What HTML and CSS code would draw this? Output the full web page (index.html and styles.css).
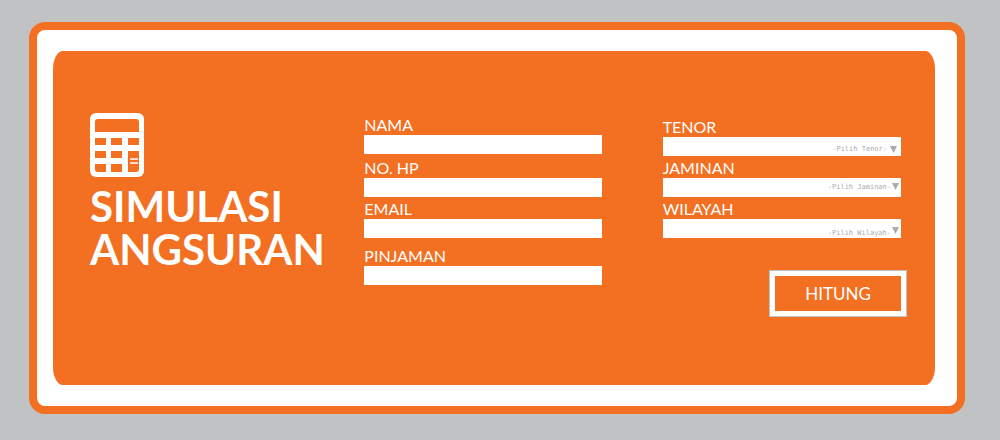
FILE: index.html
```html
<!DOCTYPE html>
<html lang="id">
<head>
<meta charset="utf-8">
<meta name="viewport" content="width=device-width, initial-scale=1">
<title>Simulasi Angsuran</title>
<link rel="stylesheet" href="styles.css">
</head>
<body>
<main class="frame">
  <form class="panel">
    <header class="intro">
      <svg class="calculator" viewBox="0 0 54 64" aria-hidden="true">
        <rect width="54" height="64" rx="6" fill="#fff"/>
        <g fill="#f36f21">
          <path d="M5 19V9q0-3 3-3h38q3 0 3 3v10z"/>
          <path d="M5 25h11v7H5zM21 25h11v7H21zM38 25h11v7H38z"/>
          <path d="M5 38h11v7H5zM21 38h11v7H21z"/>
          <path d="M5 51h11v8H8q-3 0-3-3zM21 51h11v8H21z"/>
          <path d="M38 38h11v18q0 3-3 3h-8z"/>
        </g>
        <path d="M40 46h8M40 50h8" stroke="#fff" stroke-width="1.6"/>
      </svg>
      <h1 class="title">SIMULASI<br>ANGSURAN</h1>
    </header>

    <div class="column">
      <div class="field">
        <label class="label" for="nama">NAMA</label>
        <input class="control" id="nama" type="text">
      </div>
      <div class="field field-spaced">
        <label class="label" for="hp">NO. HP</label>
        <input class="control" id="hp" type="tel">
      </div>
      <div class="field">
        <label class="label" for="email">EMAIL</label>
        <input class="control" id="email" type="email">
      </div>
      <div class="field field-wide">
        <label class="label" for="pinjaman">PINJAMAN</label>
        <input class="control" id="pinjaman" type="text">
      </div>
    </div>

    <div class="column column-options">
      <div class="field">
        <label class="label" for="tenor">TENOR</label>
        <div class="picker picker-tenor">
          <select class="control select" id="tenor"><option>-Pilih Tenor-</option></select>
        </div>
      </div>
      <div class="field">
        <label class="label" for="jaminan">JAMINAN</label>
        <div class="picker picker-jaminan">
          <select class="control select" id="jaminan"><option>-Pilih Jaminan-</option></select>
        </div>
      </div>
      <div class="field">
        <label class="label" for="wilayah">WILAYAH</label>
        <div class="picker picker-wilayah">
          <select class="control select" id="wilayah"><option>-Pilih Wilayah-</option></select>
        </div>
      </div>
      <button class="submit" type="submit">HITUNG</button>
    </div>
  </form>
</main>
</body>
</html>
```

FILE: styles.css
```css
:root {
  --orange: #f36f21;
  --grey: #c1c2c4;
}

* {
  box-sizing: border-box;
}

body {
  display: flex;
  flex-direction: column;
  min-height: 100vh;
  margin: 0;
  background: var(--grey);
  color: #fff;
  font-family: Lato, "Open Sans", sans-serif;
}

.frame {
  display: flex;
  flex: 1;
  margin: 22px 35px 26px 29px;
  padding: 21px 22px 21px 16px;
  border: 8px solid var(--orange);
  border-radius: 16px;
  background: #fff;
}

.panel {
  display: grid;
  flex: 1;
  grid-template-columns: minmax(0, 213fr) minmax(0, 237fr) minmax(0, 238fr);
  column-gap: 61px;
  align-items: start;
  padding: 62px 34px 60px 37px;
  border-radius: 10px / 18px;
  background: var(--orange);
}

.calculator {
  display: block;
  width: 54px;
  height: 64px;
}

.title {
  margin: 8px 0 0;
  font-size: 42px;
  font-weight: 700;
  line-height: 43px;
  white-space: nowrap;
}

.column {
  display: flex;
  flex-direction: column;
  gap: 2px;
  padding-top: 2px;
}

.column-options {
  gap: 1px;
  padding-top: 4px;
}

.field {
  display: flex;
  flex-direction: column;
}

.field-spaced {
  padding-top: 2px;
}

.field-wide {
  padding-top: 6px;
}

.label {
  font-size: 16px;
  line-height: 20px;
}

.control {
  display: block;
  width: 100%;
  height: 19px;
  margin: 0;
  padding: 0 4px;
  border: 0;
  border-radius: 0;
  background: #fff;
  color: #555;
  font: 12px/19px Lato, sans-serif;
}

.picker {
  position: relative;
}

.picker-tenor,
.picker-jaminan {
  padding-bottom: 1px;
}

.picker::after {
  content: "";
  position: absolute;
  top: 5px;
  right: 2px;
  width: 7px;
  height: 7px;
  background: #a9abae;
  clip-path: polygon(0 0, 100% 0, 50% 100%);
  pointer-events: none;
}

.select {
  appearance: none;
  padding: 0 10px 0 4px;
  color: #a9abae;
  font: 7px/9px "DejaVu Sans Mono", monospace;
  text-align: right;
  text-align-last: right;
}

.picker-tenor .select {
  padding: 5px 14px 0 4px;
}

.picker-tenor::after {
  top: 9px;
  right: 4px;
}

.picker-wilayah .select {
  padding-top: 9px;
}

.picker-wilayah::after {
  top: 8px;
}

.submit {
  align-self: flex-end;
  width: 138px;
  height: 47px;
  margin: 31px -6px 0 0;
  padding: 0;
  border: 1px solid var(--grey);
  background: var(--orange);
  box-shadow: inset 0 0 0 5px #fff;
  color: #fff;
  font: 17px/24px Lato, sans-serif;
  cursor: pointer;
}
```
